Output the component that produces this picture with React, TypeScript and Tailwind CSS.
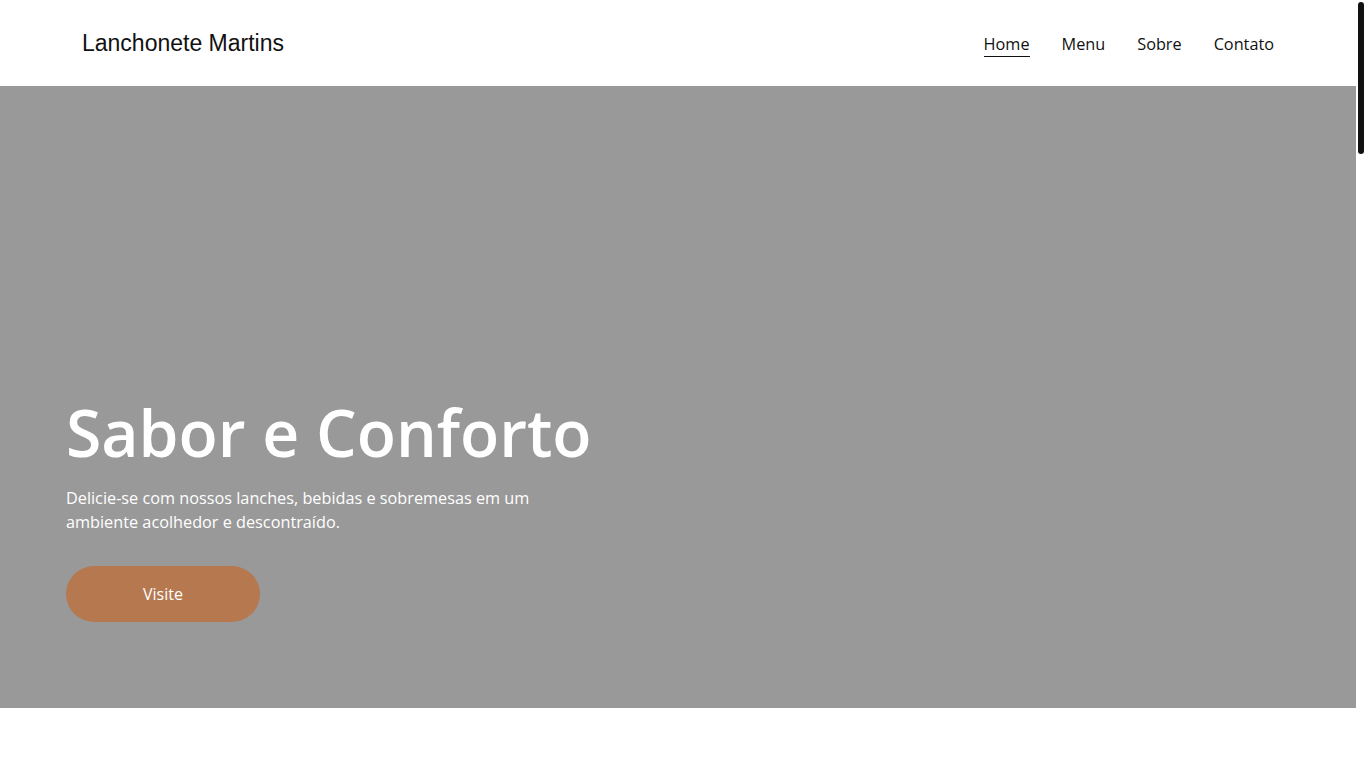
import React from 'react';

const links = ['Home', 'Menu', 'Sobre', 'Contato'];

const App: React.FC = () => {
  return (
    <div className="relative h-screen flex bg-white font-['Open_Sans',sans-serif]">
      <div className="flex-1 h-screen overflow-hidden">
        <header className="h-[86px] flex items-center justify-between px-[82px] bg-white">
          <a href="#" className="font-['Liberation_Sans',Arial,sans-serif] text-[23px] text-[#111111] leading-none">
            Lanchonete Martins
          </a>
          <nav className="flex items-center gap-8">
            {links.map((link, i) => (
              <a
                key={link}
                href="#"
                className={
                  i === 0
                    ? 'text-[16.25px] text-[#111111] border-b border-[#111111] leading-6 pt-px mb-[-1px]'
                    : 'text-[16.25px] text-[#111111] border-b border-transparent leading-6 pt-px mb-[-1px]'
                }
              >
                {link}
              </a>
            ))}
          </nav>
        </header>

        <section className="h-[622px] bg-[#999999] flex items-end px-[66px] pb-[86px]">
          <div>
            <h1 className="text-[64.25px] font-semibold text-white leading-none whitespace-nowrap">
              Sabor e Conforto
            </h1>
            <p className="mt-[22px] max-w-[500px] text-[16.25px] leading-6 text-white">
              Delicie-se com nossos lanches, bebidas e sobremesas em um ambiente acolhedor e descontraído.
            </p>
            <button className="mt-8 w-[194px] h-14 rounded-full bg-[#b5784f] text-white text-base font-medium">
              Visite
            </button>
          </div>
        </section>

        <main className="h-[3172px] bg-white" />
      </div>

      {/* scrollbar */}
      <div className="relative w-[10px] h-screen bg-white">
        <div className="absolute left-[2px] top-[2px] w-[6px] h-[152px] rounded-full bg-[#111111]" />
      </div>
    </div>
  );
};

export default App;
